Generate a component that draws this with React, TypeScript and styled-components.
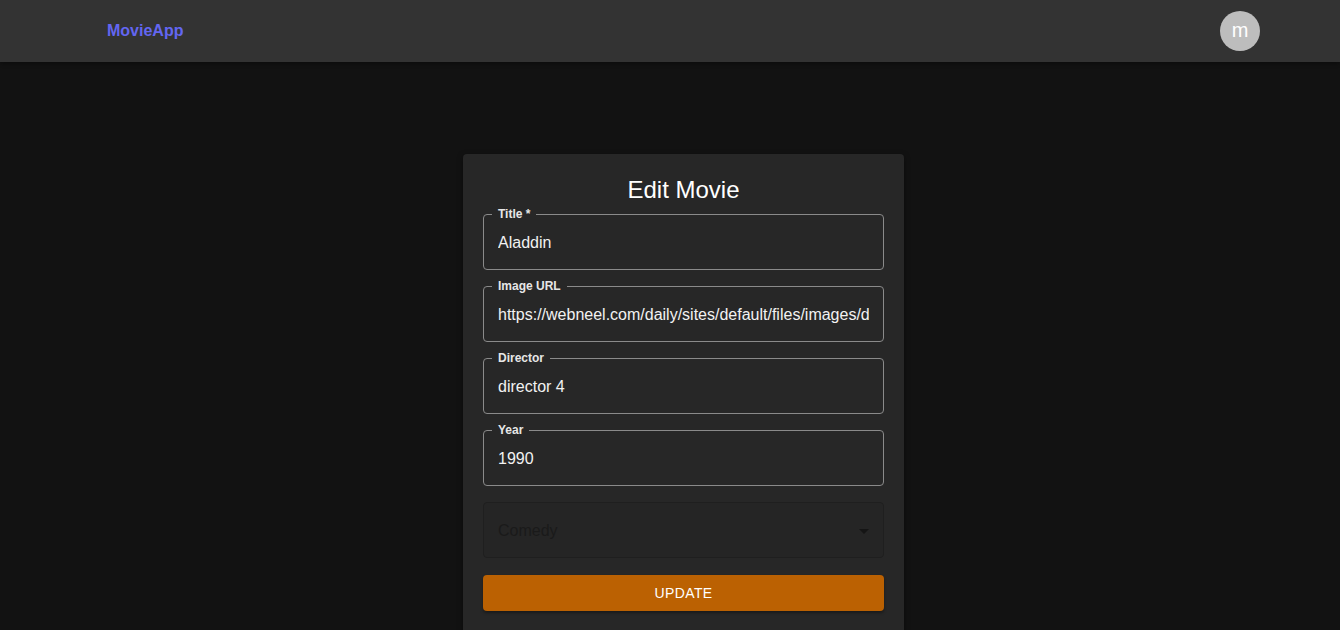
import React, { useState } from "react";
import styled, { createGlobalStyle } from "styled-components";

const GlobalStyle = createGlobalStyle`
  html, body {
    margin: 0;
    padding: 0;
    background: #121212;
    font-family: "Liberation Sans", Arial, sans-serif;
    color: #fff;
  }
  * { box-sizing: border-box; }
`;

const Page = styled.div`
  min-height: 630px;
  background: #121212;
`;

const Navbar = styled.header`
  height: 62px;
  background: #333333;
  display: flex;
  align-items: center;
  justify-content: space-between;
  padding: 0 80px 0 107px;
  box-shadow: 0 2px 4px rgba(0, 0, 0, 0.3);
`;

const Logo = styled.a`
  color: #6366f1;
  font-size: 16px;
  font-weight: 700;
  text-decoration: none;
`;

const Avatar = styled.div`
  width: 40px;
  height: 40px;
  border-radius: 50%;
  background: #bdbdbd;
  color: #fff;
  display: flex;
  align-items: center;
  justify-content: center;
  font-size: 20px;
  padding-bottom: 2px;
`;

const Main = styled.main`
  display: flex;
  justify-content: center;
  padding: 92px 0 0 27px;
`;

const Card = styled.div`
  width: 441px;
  background: #272727;
  border-radius: 4px;
  padding: 20px 20px 32px;
  box-shadow: 0 2px 6px rgba(0, 0, 0, 0.4);
`;

const Heading = styled.h2`
  margin: 0;
  font-size: 24px;
  font-weight: 400;
  line-height: 32px;
  text-align: center;
`;

const Form = styled.form`
  display: flex;
  flex-direction: column;
  margin-top: 1px;
`;

const Field = styled.fieldset`
  margin: 0 0 9px;
  padding: 0 14px 5px;
  border: 1px solid #8a8a8a;
  border-radius: 4px;
  min-width: 0;
`;

const Legend = styled.legend`
  font-size: 12px;
  line-height: 14px;
  font-weight: 700;
  color: #e6e6e6;
  padding: 0 6px;
  margin-left: -6px;
`;

const Input = styled.input`
  display: block;
  width: 100%;
  height: 43px;
  border: none;
  outline: none;
  background: transparent;
  color: #f2f2f2;
  font-family: inherit;
  font-size: 16px;
  padding: 0;
`;

const SelectBox = styled.div`
  height: 56px;
  margin-top: 7px;
  border: 1px solid #1f1f1f;
  border-radius: 4px;
  background: #252525;
  display: flex;
  align-items: center;
  justify-content: space-between;
  padding: 2px 14px 0;
  color: #1a1a1a;
  font-size: 16px;
`;

const Arrow = styled.span`
  width: 0;
  height: 0;
  border-left: 5px solid transparent;
  border-right: 5px solid transparent;
  border-top: 5px solid #151515;
  margin-right: 0;
`;

const SubmitButton = styled.button`
  margin-top: 17px;
  height: 36px;
  border: none;
  border-radius: 4px;
  background: #bb6102;
  color: #fff;
  font-family: inherit;
  font-size: 14px;
  font-weight: 500;
  letter-spacing: 0.4px;
  text-transform: uppercase;
  box-shadow: 0 2px 3px rgba(0, 0, 0, 0.35);
  cursor: pointer;
`;

const App = () => {
  const [form, setForm] = useState({
    title: "Aladdin",
    image: "https://webneel.com/daily/sites/default/files/images/daily/08-2018/aladdin.jpg",
    director: "director 4",
    year: "1990",
  });

  const onChangeHandler = (event: React.ChangeEvent<HTMLInputElement>) => {
    const { name, value } = event.currentTarget;
    setForm({ ...form, [name]: value });
  };

  return (
    <Page>
      <GlobalStyle />
      <Navbar>
        <Logo href="#">MovieApp</Logo>
        <Avatar>m</Avatar>
      </Navbar>
      <Main>
        <Card>
          <Heading>Edit Movie</Heading>
          <Form onSubmit={(e) => e.preventDefault()}>
            <Field>
              <Legend>Title *</Legend>
              <Input name="title" value={form.title} onChange={onChangeHandler} />
            </Field>
            <Field>
              <Legend>Image URL</Legend>
              <Input name="image" value={form.image} onChange={onChangeHandler} />
            </Field>
            <Field>
              <Legend>Director</Legend>
              <Input name="director" value={form.director} onChange={onChangeHandler} />
            </Field>
            <Field>
              <Legend>Year</Legend>
              <Input name="year" value={form.year} onChange={onChangeHandler} />
            </Field>
            <SelectBox>
              <span>Comedy</span>
              <Arrow />
            </SelectBox>
            <SubmitButton type="submit">Update</SubmitButton>
          </Form>
        </Card>
      </Main>
    </Page>
  );
};

export default App;
